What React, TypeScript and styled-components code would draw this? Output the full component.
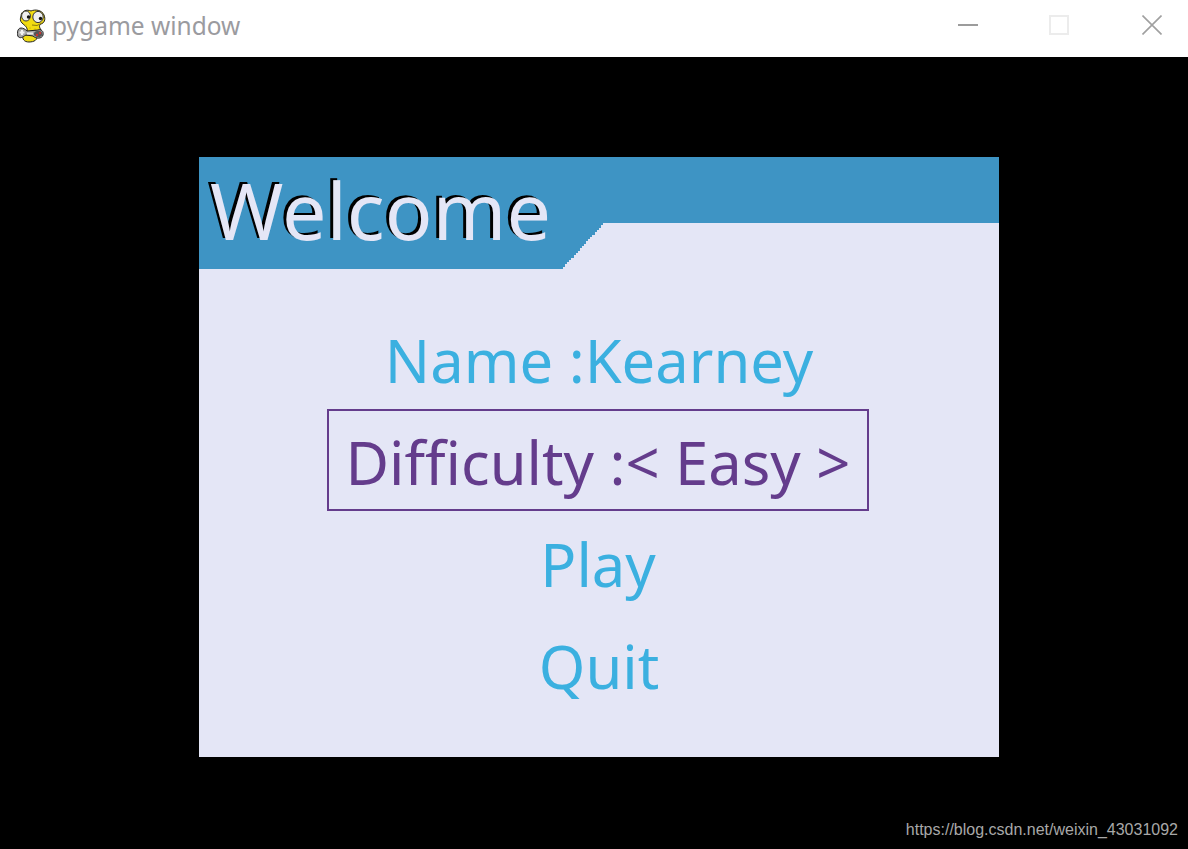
import React from "react";
import styled, { createGlobalStyle } from "styled-components";

const Global = createGlobalStyle`
  html, body { margin: 0; padding: 0; background: #000; }
  #root { height: 849px; }
`;

/* Stair-stepped diagonal of the header tab, as the pixel edge of the original. */
const stairs = (() => {
  const pts: string[] = [];
  for (let i = 0; i < 20; i++) {
    const x = 404 - Math.round((i * 40) / 19);
    const y = 66 + Math.round((i * 46) / 20);
    const next = 66 + Math.round(((i + 1) * 46) / 20);
    pts.push(`${x}px ${y}px`, `${x}px ${next}px`);
  }
  return pts.join(", ");
})();

const Win = styled.div`
  width: 1188px;
  height: 849px;
  display: flex;
  flex-direction: column;
  position: relative;
  overflow: hidden;
  font-family: "Noto Sans", "Open Sans", sans-serif;
`;

const TitleBar = styled.header`
  height: 57px;
  background: #fff;
  display: flex;
  align-items: center;
  padding-left: 17px;
  flex: none;
`;

const AppName = styled.span`
  margin: -5px 0 0 5px;
  font-size: 24.5px;
  line-height: 52px;
  color: #9b9b9f;
`;

const Controls = styled.div`
  margin-left: auto;
  display: flex;
  align-items: center;
  gap: 73px;
  padding-right: 26px;
  margin-top: -7px;
`;

const MinSlot = styled.span`
  display: flex;
  margin-right: -2px;
`;

const Stage = styled.main`
  flex: 1;
  background: #000;
  padding: 100px 0 0 199px;
`;

const Panel = styled.section`
  width: 800px;
  height: 600px;
  background: #e4e6f6;
`;

const Header = styled.div`
  height: 112px;
  background: #3e94c4;
  clip-path: polygon(0 0, 800px 0, 800px 66px, ${stairs}, 0 112px);
  padding-left: 11px;
  box-sizing: border-box;
`;

const Title = styled.h1`
  margin: 0;
  font-size: 79px;
  font-weight: 400;
  line-height: 106px;
  color: #e4e6f6;
  text-shadow: -3px -2px 0 #000;
`;

const Menu = styled.nav`
  display: flex;
  flex-direction: column;
  align-items: center;
  padding-top: 38px;
`;

const Item = styled.div<{ $active?: boolean; $nudge?: number }>`
  height: 102px;
  box-sizing: border-box;
  display: flex;
  align-items: center;
  justify-content: center;
  padding: 4px 17px 0;
  margin-right: ${(p) => p.$nudge ?? 0}px;
  font-size: 59.7px;
  line-height: 98px;
  white-space: pre;
  color: ${(p) => (p.$active ? "#643c8c" : "#3bb0e0")};
  border: 2px solid ${(p) => (p.$active ? "#643c8c" : "transparent")};
`;

const Watermark = styled.span`
  position: absolute;
  right: 10px;
  bottom: 9px;
  font-family: "Liberation Sans", Arial, sans-serif;
  font-size: 16px;
  line-height: 20px;
  color: #a8a8a8;
`;

const PygameIcon = () => (
  <svg width="30" height="36" viewBox="0 0 30 36" style={{ flex: "none", marginTop: -3 }}>
    <path d="M6 26 C5 30 7 33 12 33 C17 33 21 31 20 26Z" fill="#f0dc14" stroke="#222" strokeWidth="1" />
    <path d="M4 7 C4 2 10 0 14 2 C18 0 25 1 27 6 C29 11 27 14 24 15 C22 16 22 18 24 21 L10 23 C11 18 8 17 5 14 C3 12 3 10 4 7Z" fill="#f2dc12" stroke="#222" strokeWidth="1" />
    <ellipse cx="9" cy="7" rx="4.4" ry="5" fill="#efefef" stroke="#333" strokeWidth="1" />
    <ellipse cx="21" cy="8" rx="5.2" ry="5.6" fill="#efefef" stroke="#333" strokeWidth="1" />
    <circle cx="11.5" cy="8" r="1.7" fill="#111" />
    <circle cx="23.5" cy="9.5" r="1.7" fill="#111" />
    <path d="M15 16 Q20 18 25 14" fill="none" stroke="#8a7a10" strokeWidth="1" />
    <circle cx="9" cy="16" r=".6" fill="#b09a10" />
    <circle cx="13" cy="19" r=".6" fill="#b09a10" />
    <circle cx="18" cy="20" r=".6" fill="#b09a10" />
    <path d="M4 19 C0 19 -0.5 26 1.5 28 C4 30 7 27 9 26 L16 27 C19 30 25 30 26 26 C27 22 24 20 21 21 L10 22 C8 20 6 19 4 19Z" fill="#a8a8a8" stroke="#222" strokeWidth="1" />
    <rect x="2.5" y="22.5" width="5" height="2" fill="#f2f2f2" />
    <rect x="4" y="21" width="2" height="5" fill="#f2f2f2" />
    <rect x="10" y="23.5" width="6" height="2" fill="#e8e8e8" />
    <path d="M17 24 C19 21 25 21 25.5 25 C25 29 19 29 17 26Z" fill="#555" />
    <circle cx="20" cy="26" r="1.2" fill="#c33" />
    <circle cx="23" cy="24" r="1.2" fill="#c33" />
  </svg>
);

const MinIcon = () => (
  <svg width="20" height="20" viewBox="0 0 20 20">
    <rect x="0" y="9" width="20" height="2" fill="#9c9c9c" />
  </svg>
);

const MaxIcon = () => (
  <svg width="20" height="20" viewBox="0 0 20 20">
    <rect x="1" y="1" width="18" height="18" fill="none" stroke="#ececec" strokeWidth="2" />
  </svg>
);

const CloseIcon = () => (
  <svg width="20" height="20" viewBox="0 0 20 20">
    <path d="M0.5 0.5 L19.5 19.5 M19.5 0.5 L0.5 19.5" stroke="#a0a0a0" strokeWidth="1.6" fill="none" />
  </svg>
);

export default function App() {
  return (
    <Win>
      <Global />
      <TitleBar>
        <PygameIcon />
        <AppName>pygame window</AppName>
        <Controls>
          <MinSlot>
            <MinIcon />
          </MinSlot>
          <MaxIcon />
          <CloseIcon />
        </Controls>
      </TitleBar>
      <Stage>
        <Panel>
          <Header>
            <Title>Welcome</Title>
          </Header>
          <Menu>
            <Item>Name :Kearney</Item>
            <Item $active $nudge={2}>Difficulty :&lt; Easy &gt;</Item>
            <Item $nudge={2}>Play</Item>
            <Item>Quit</Item>
          </Menu>
        </Panel>
      </Stage>
      <Watermark>https://blog.csdn.net/weixin_43031092</Watermark>
    </Win>
  );
}
